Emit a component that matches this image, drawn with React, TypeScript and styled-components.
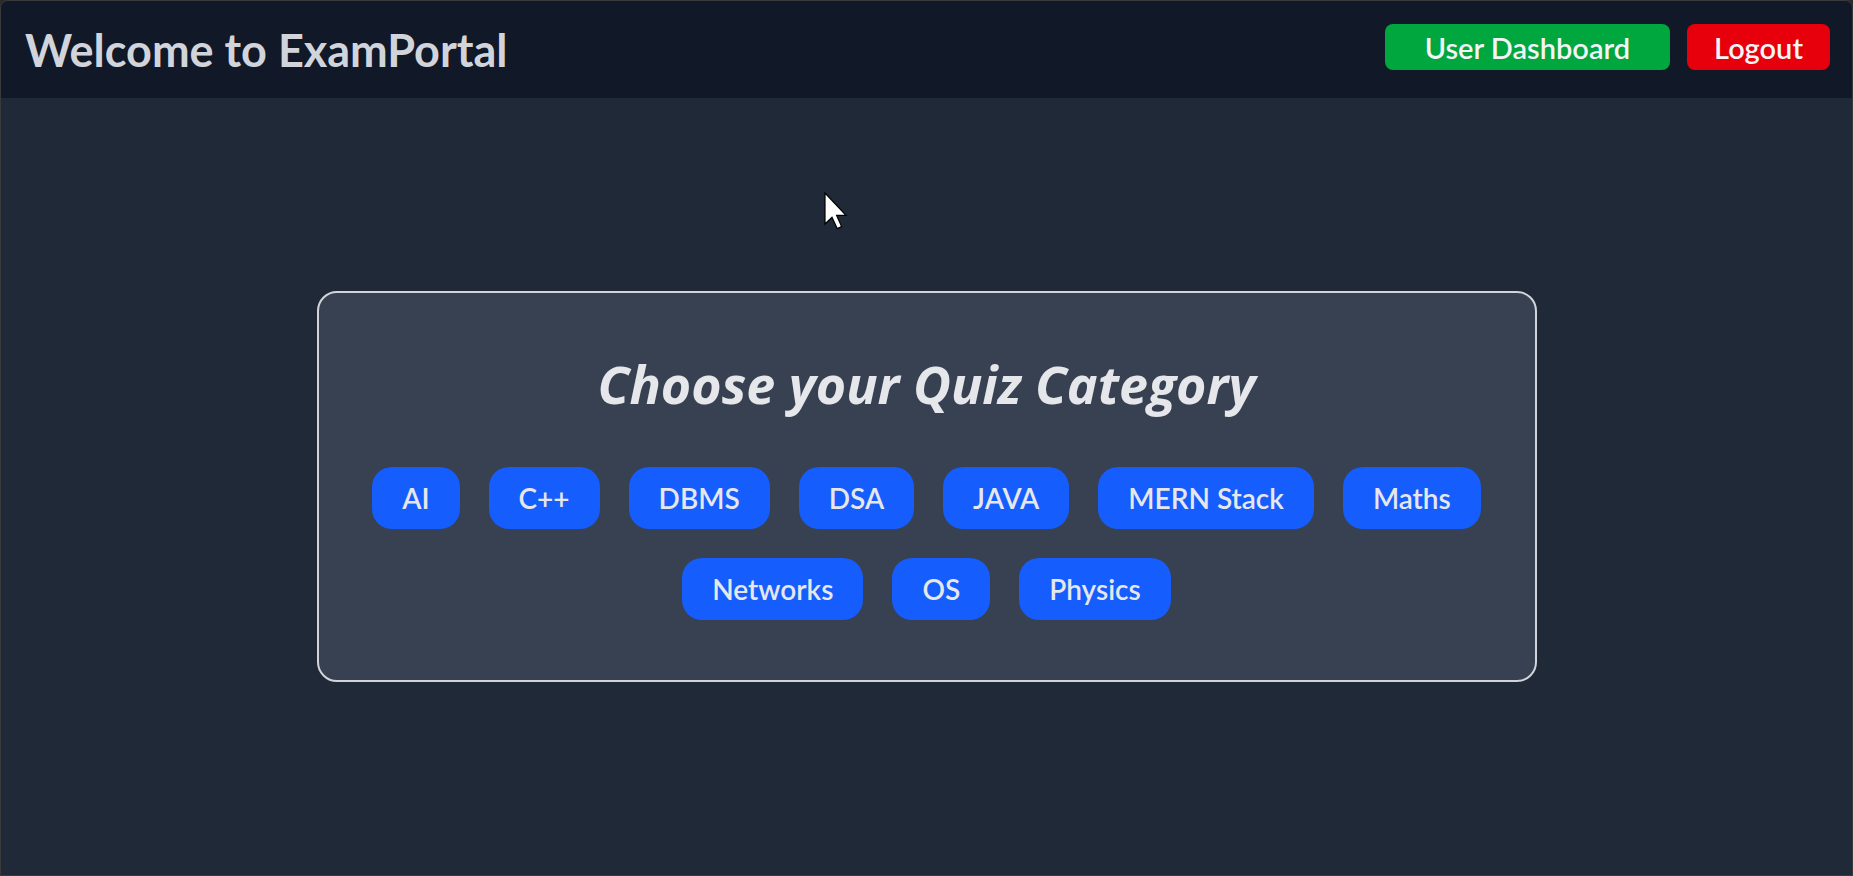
import React from 'react';
import styled, { createGlobalStyle } from 'styled-components';

const categories = ['AI', 'C++', 'DBMS', 'DSA', 'JAVA', 'MERN Stack', 'Maths', 'Networks', 'OS', 'Physics'];

const App: React.FC = () => {
  return (
    <>
      <GlobalStyle />
      <Frame>
        <Header>
          <Title>Welcome to ExamPortal</Title>
          <Nav>
            <NavButton $bg='#00a63e' $px={40}>User Dashboard</NavButton>
            <NavButton $bg='#e7000b' $px={27}>Logout</NavButton>
          </Nav>
        </Header>
        <Main>
          <Card>
            <Heading>Choose your Quiz Category</Heading>
            <CategoryList>
              {categories.map((c) => (
                <CategoryButton key={c}>{c}</CategoryButton>
              ))}
            </CategoryList>
          </Card>
          <Cursor width='24' height='38' viewBox='0 0 12 19'>
            <path
              d='M0.5 0.5 L0.5 16 L4 12.6 L6.6 18.3 L8.8 17.3 L6.3 11.7 L11 11.7 Z'
              fill='#fff'
              stroke='#000'
              strokeWidth='0.6'
              strokeLinejoin='miter'
            />
          </Cursor>
        </Main>
      </Frame>
    </>
  );
};

export default App;

const GlobalStyle = createGlobalStyle`
  html, body {
    margin: 0;
    padding: 0;
    background: #2b2b2b;
  }

  * {
    box-sizing: border-box;
  }

  body {
    font-family: Lato, "Noto Sans", sans-serif;
  }
`;

const Frame = styled.div`
  min-height: 100vh;
  display: flex;
  flex-direction: column;
  border: 1px solid #3a3a3a;
  border-radius: 8px 8px 0 0;
  overflow: hidden;
  background: #1f2937;
`;

const Header = styled.header`
  height: 97px;
  background: #111827;
  display: flex;
  align-items: center;
  justify-content: space-between;
  padding: 0 22px 0 24px;
`;

const Title = styled.h1`
  margin: 0;
  font-size: 45px;
  line-height: 54px;
  font-weight: 700;
  color: #d1d5db;
`;

const Nav = styled.nav`
  display: flex;
  gap: 17px;
  margin-bottom: 5px;
`;

const NavButton = styled.button<{ $bg: string; $px: number }>`
  height: 46px;
  padding: 0 ${(p) => p.$px}px;
  border: none;
  border-radius: 8px;
  background: ${(p) => p.$bg};
  color: #f3f4f6;
  font-family: inherit;
  font-size: 29px;
  font-weight: 600;
  cursor: pointer;
`;

const Main = styled.main`
  flex: 1;
  position: relative;
  display: flex;
  align-items: center;
  justify-content: center;
`;

const Card = styled.section`
  width: 1220px;
  padding: 61px 30px 60px;
  background: #374151;
  border: 2px solid #d1d5db;
  border-radius: 20px;
  display: flex;
  flex-direction: column;
  align-items: center;
`;

const Heading = styled.h2`
  margin: 0;
  font-family: "Open Sans", Lato, sans-serif;
  font-size: 52px;
  line-height: 60px;
  font-style: italic;
  font-weight: 700;
  color: #e5e7eb;
`;

const CategoryList = styled.div`
  margin-top: 53px;
  display: flex;
  flex-wrap: wrap;
  justify-content: center;
  gap: 29px;
`;

const CategoryButton = styled.button`
  height: 62px;
  padding: 0 30px;
  border: none;
  border-radius: 20px;
  background: #155dfc;
  color: #e5e7eb;
  font-family: inherit;
  font-size: 28px;
  font-weight: 600;
  cursor: pointer;
`;

const Cursor = styled.svg`
  position: absolute;
  left: 823px;
  top: 94px;
  pointer-events: none;
`;
